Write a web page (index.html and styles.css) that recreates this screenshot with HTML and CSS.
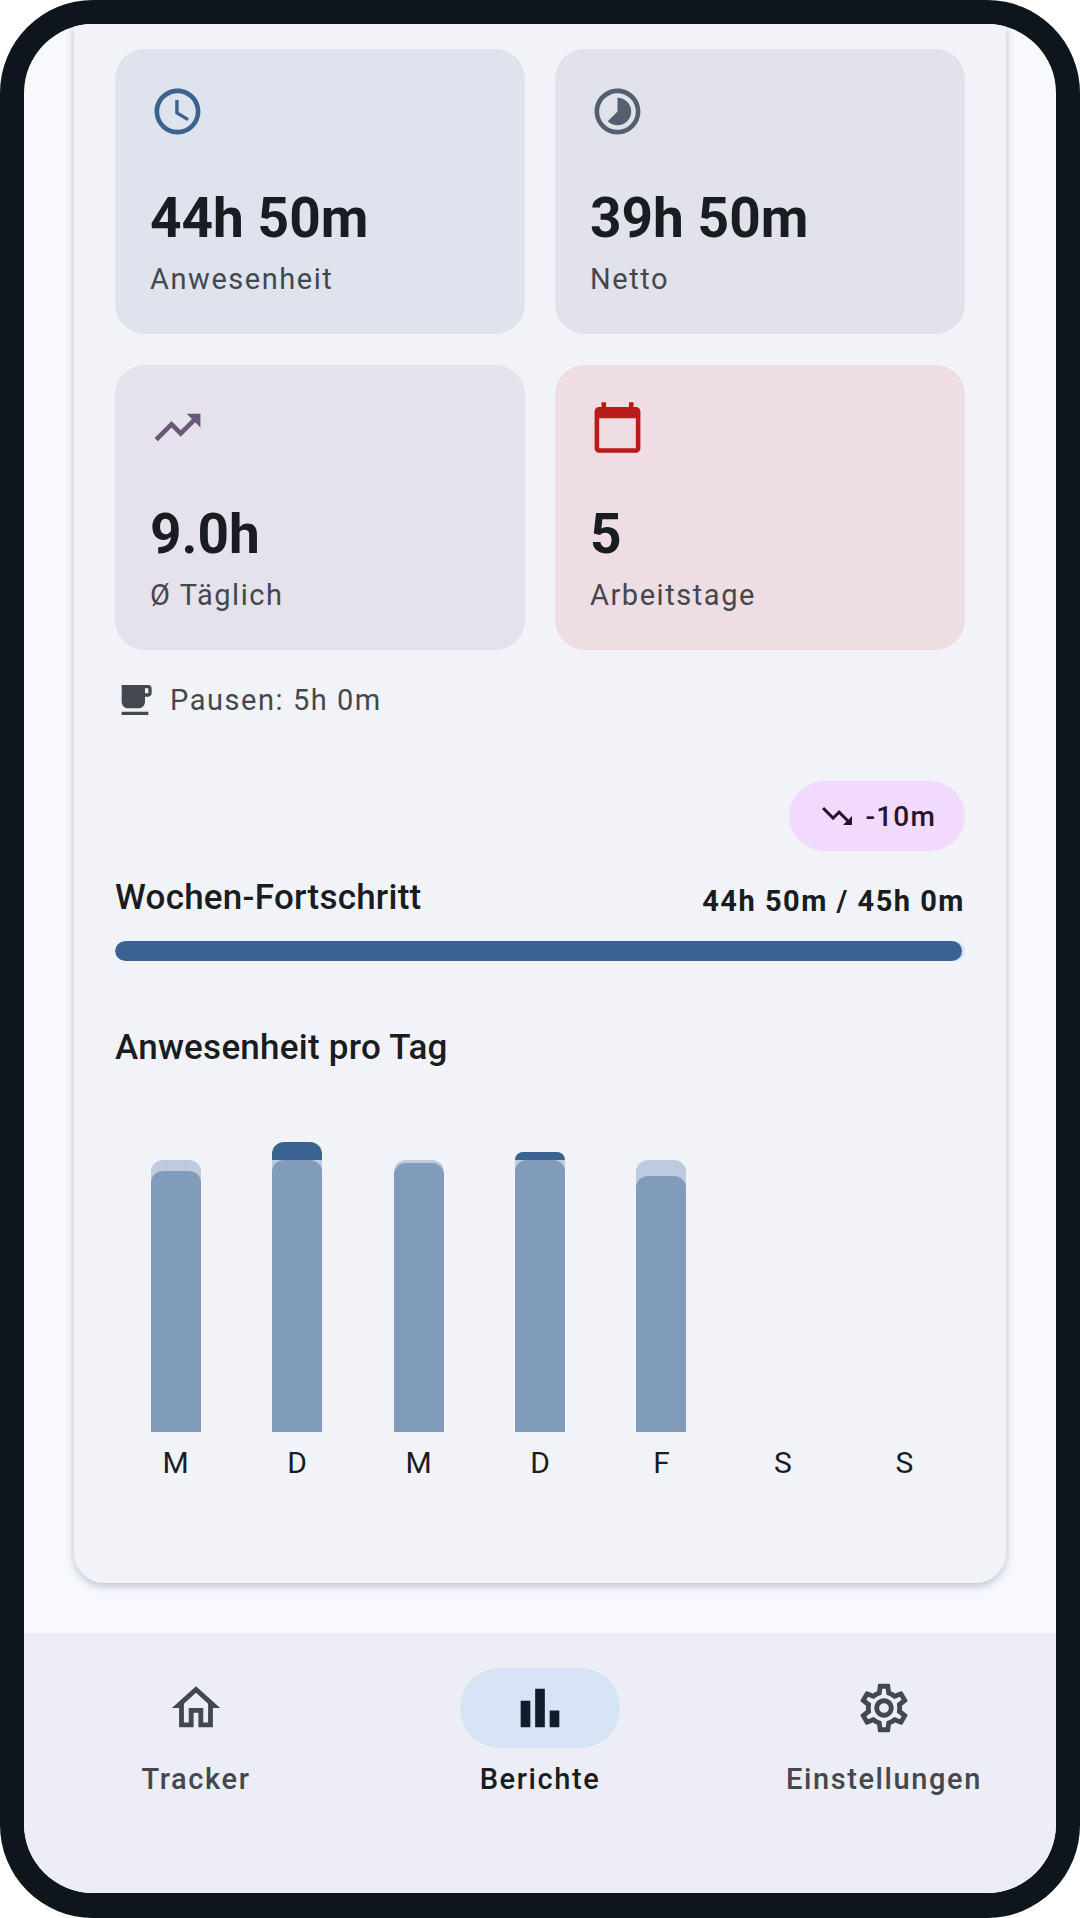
FILE: index.html
```html
<!DOCTYPE html>
<html lang="de">
<head>
<meta charset="utf-8">
<title>Berichte</title>
<link rel="stylesheet" href="styles.css">
</head>
<body>
<div class="phone">
  <div class="screen">
    <main class="scroll">
      <section class="card">
        <div class="tiles">
          <article class="tile tile-blue">
            <svg class="tile-icon icon-blue" viewBox="0 0 24 24"><path d="M11.99 2C6.47 2 2 6.48 2 12s4.47 10 9.99 10C17.52 22 22 17.52 22 12S17.52 2 11.99 2zM12 20c-4.42 0-8-3.58-8-8s3.58-8 8-8 8 3.58 8 8-3.58 8-8 8zm.5-13H11v6l5.25 3.15.75-1.23-4.5-2.67z"/></svg>
            <div class="tile-value">44h 50m</div>
            <div class="tile-label">Anwesenheit</div>
          </article>
          <article class="tile tile-grey">
            <svg class="tile-icon icon-grey" viewBox="0 0 24 24"><path d="M16.24 7.76C15.07 6.59 13.54 6 12 6v6l-4.24 4.24c2.34 2.34 6.14 2.34 8.49 0 2.34-2.34 2.34-6.14-.01-8.48zM12 2C6.48 2 2 6.48 2 12s4.48 10 10 10 10-4.48 10-10S17.52 2 12 2zm0 18c-4.42 0-8-3.58-8-8s3.58-8 8-8 8 3.58 8 8-3.58 8-8 8z"/></svg>
            <div class="tile-value">39h 50m</div>
            <div class="tile-label">Netto</div>
          </article>
          <article class="tile tile-violet">
            <svg class="tile-icon icon-violet" viewBox="0 0 24 24"><path d="M16 6l2.29 2.29-4.88 4.88-4-4L2 16.59 3.41 18l6-6 4 4 6.3-6.29L22 12V6z"/></svg>
            <div class="tile-value">9.0h</div>
            <div class="tile-label">Ø Täglich</div>
          </article>
          <article class="tile tile-red">
            <svg class="tile-icon icon-red" viewBox="0 0 24 24"><path d="M20 3h-1V1h-2v2H7V1H5v2H4c-1.1 0-2 .9-2 2v16c0 1.1.9 2 2 2h16c1.1 0 2-.9 2-2V5c0-1.1-.9-2-2-2zm0 18H4V8h16v13z"/></svg>
            <div class="tile-value">5</div>
            <div class="tile-label">Arbeitstage</div>
          </article>
        </div>

        <div class="breaks">
          <svg class="breaks-icon" viewBox="0 0 24 24"><path d="M20 3H4v10c0 2.21 1.79 4 4 4h6c2.21 0 4-1.79 4-4v-3h2c1.11 0 2-.9 2-2V5c0-1.11-.89-2-2-2zm0 5h-2V5h2v3zM4 19h16v2H4z"/></svg>
          <span>Pausen: 5h 0m</span>
        </div>

        <div class="delta-row">
          <div class="delta">
            <svg class="delta-icon" viewBox="0 0 24 24"><path d="M16 18l2.29-2.29-4.88-4.88-4 4L2 7.41 3.41 6l6 6 4-4 6.3 6.29L22 12v6z"/></svg>
            <span>-10m</span>
          </div>
        </div>

        <div class="progress-head">
          <h2 class="heading">Wochen-Fortschritt</h2>
          <span class="progress-value">44h 50m / 45h 0m</span>
        </div>
        <div class="progress-track"><div class="progress-fill" style="width:99.6%"></div></div>

        <h2 class="heading chart-heading">Anwesenheit pro Tag</h2>
        <div class="chart">
          <div class="day"><div class="track"><div class="bar-target"><span class="bar-fill" style="height:261px"></span></div></div><span class="day-label">M</span></div>
          <div class="day"><div class="track"><span class="bar-excess" style="height:18px"></span><div class="bar-target bar-target-full"><span class="bar-fill" style="height:272px"></span></div></div><span class="day-label">D</span></div>
          <div class="day"><div class="track"><div class="bar-target"><span class="bar-fill" style="height:269px"></span></div></div><span class="day-label">M</span></div>
          <div class="day"><div class="track"><span class="bar-excess" style="height:8px"></span><div class="bar-target bar-target-full"><span class="bar-fill" style="height:272px"></span></div></div><span class="day-label">D</span></div>
          <div class="day"><div class="track"><div class="bar-target"><span class="bar-fill" style="height:256px"></span></div></div><span class="day-label">F</span></div>
          <div class="day"><div class="track"></div><span class="day-label">S</span></div>
          <div class="day"><div class="track"></div><span class="day-label">S</span></div>
        </div>
      </section>
    </main>

    <nav class="nav">
      <div class="nav-item">
        <div class="nav-pill">
          <svg class="nav-icon" viewBox="0 0 24 24"><path d="M12 5.69l5 4.5V18h-2v-6H9v6H7v-7.81l5-4.5M12 3L2 12h3v8h6v-6h2v6h6v-8h3L12 3z"/></svg>
        </div>
        <span class="nav-label">Tracker</span>
      </div>
      <div class="nav-item nav-item-active">
        <div class="nav-pill">
          <svg class="nav-icon" viewBox="0 0 24 24"><path d="M4 9h4v11H4zm12 4h4v7h-4zm-6-9h4v16h-4z"/></svg>
        </div>
        <span class="nav-label">Berichte</span>
      </div>
      <div class="nav-item">
        <div class="nav-pill">
          <svg class="nav-icon" viewBox="0 0 24 24"><path d="M19.43 12.98c.04-.32.07-.64.07-.98 0-.34-.03-.66-.07-.98l2.11-1.65c.19-.15.24-.42.12-.64l-2-3.46c-.09-.16-.26-.25-.44-.25-.06 0-.12.01-.17.03l-2.49 1c-.52-.4-1.08-.73-1.69-.98l-.38-2.65C14.46 2.18 14.25 2 14 2h-4c-.25 0-.46.18-.49.42l-.38 2.65c-.61.25-1.17.59-1.69.98l-2.49-1c-.06-.02-.12-.03-.18-.03-.17 0-.34.09-.43.25l-2 3.46c-.13.22-.07.49.12.64l2.11 1.65c-.04.32-.07.65-.07.98 0 .33.03.66.07.98l-2.11 1.65c-.19.15-.24.42-.12.64l2 3.46c.09.16.26.25.44.25.06 0 .12-.01.17-.03l2.49-1c.52.4 1.08.73 1.69.98l.38 2.65c.03.24.24.42.49.42h4c.25 0 .46-.18.49-.42l.38-2.65c.61-.25 1.17-.59 1.69-.98l2.49 1c.06.02.12.03.18.03.17 0 .34-.09.43-.25l2-3.46c.12-.22.07-.49-.12-.64l-2.11-1.65zm-1.98-1.71c.04.31.05.52.05.73 0 .21-.02.43-.05.73l-.14 1.13.89.7 1.08.84-.7 1.21-1.27-.51-1.04-.42-.9.68c-.43.32-.84.56-1.25.73l-1.06.43-.16 1.13-.2 1.35h-1.4l-.19-1.35-.16-1.13-1.06-.43c-.43-.18-.83-.41-1.23-.71l-.91-.7-1.06.43-1.27.51-.7-1.21 1.08-.84.89-.7-.14-1.13c-.03-.31-.05-.54-.05-.74s.02-.43.05-.73l.14-1.13-.89-.7-1.08-.84.7-1.21 1.27.51 1.04.42.9-.68c.43-.32.84-.56 1.25-.73l1.06-.43.16-1.13.2-1.35h1.39l.19 1.35.16 1.13 1.06.43c.43.18.83.41 1.23.71l.91.7 1.06-.43 1.27-.51.7 1.21-1.07.85-.89.7.14 1.13zM12 8c-2.21 0-4 1.79-4 4s1.79 4 4 4 4-1.79 4-4-1.79-4-4-4zm0 6c-1.1 0-2-.9-2-2s.9-2 2-2 2 .9 2 2-.9 2-2 2z"/></svg>
        </div>
        <span class="nav-label">Einstellungen</span>
      </div>
    </nav>
  </div>
</div>
</body>
</html>
```

FILE: styles.css
```css
* { box-sizing: border-box; }

html, body {
  margin: 0;
  padding: 0;
  background: #ffffff;
}

body {
  font-family: Roboto, "Noto Sans", sans-serif;
  color: #191c20;
}

.phone {
  width: 1080px;
  height: 1918px;
  padding: 24px 24px 25px;
  background: #0f161b;
  border-radius: 93px;
}

.screen {
  display: flex;
  flex-direction: column;
  height: 100%;
  overflow: hidden;
  background: #f8f9ff;
  border-radius: 69px;
}

.scroll {
  height: 1609px;
  padding: 0 50px;
  flex: none;
}

.card {
  height: 1559px;
  padding: 25px 41px 0;
  background: #f1f3f9;
  border-radius: 0 0 30px 30px;
  box-shadow: 0 3px 8px rgba(40, 50, 70, 0.28);
}

.tiles {
  display: grid;
  grid-template-columns: 410px 410px;
  grid-auto-rows: 285px;
  gap: 31px 30px;
}

.tile {
  padding: 35px;
  border-radius: 30px;
}

.tile-blue { background: #dee3ed; }
.tile-grey { background: #e2e2ea; }
.tile-violet { background: #e5e2eb; }
.tile-red { background: #eedde2; }

.tile-icon {
  display: block;
  width: 55px;
  height: 55px;
}

.icon-blue { fill: #3a6391; }
.icon-grey { fill: #535f70; }
.icon-violet { fill: #6b5778; }
.icon-red { fill: #ba1a1a; }

.tile-value {
  margin-top: 47px;
  font-size: 55px;
  line-height: 64px;
  font-weight: 700;
}

.tile-label {
  margin-top: 9px;
  font-size: 29px;
  line-height: 40px;
  letter-spacing: 1.55px;
  color: #44474e;
}

.breaks {
  display: flex;
  align-items: center;
  gap: 15px;
  margin-top: 30px;
  font-size: 29px;
  line-height: 40px;
  letter-spacing: 1.55px;
  color: #44474e;
}

.breaks-icon {
  width: 40px;
  height: 40px;
  fill: #44474e;
}

.delta-row {
  display: flex;
  justify-content: flex-end;
  margin-top: 61px;
}

.delta {
  display: flex;
  align-items: center;
  gap: 10px;
  height: 70px;
  padding: 0 29px 0 30px;
  border-radius: 35px;
  background: #f2daff;
  color: #251431;
  font-size: 28px;
  font-weight: 500;
  letter-spacing: 1.2px;
}

.delta-icon {
  width: 36px;
  height: 36px;
  fill: #251431;
}

.progress-head {
  display: flex;
  justify-content: space-between;
  align-items: center;
  margin-top: 24px;
  height: 44px;
}

.heading {
  margin: 0;
  padding-top: 2px;
  font-size: 35px;
  line-height: 44px;
  font-weight: 500;
  letter-spacing: 0.25px;
}

.progress-value {
  padding-top: 8px;
  font-size: 29px;
  font-weight: 700;
  letter-spacing: 1.5px;
}

.progress-track {
  height: 20px;
  margin-top: 22px;
  overflow: hidden;
  background: #d6e4f5;
  border-radius: 10px;
}

.progress-fill {
  height: 100%;
  background: #3a6391;
  border-radius: 10px;
}

.chart-heading {
  margin-top: 63px;
}

.chart {
  display: grid;
  grid-template-columns: repeat(7, 1fr);
  margin-top: 62px;
}

.day {
  display: flex;
  flex-direction: column;
  align-items: center;
}

.track {
  display: flex;
  flex-direction: column;
  justify-content: flex-end;
  width: 50px;
  height: 300px;
}

.bar-excess {
  display: block;
  background: #3a6391;
  border-radius: 12px 12px 0 0;
}

.bar-target {
  position: relative;
  height: 272px;
  background: #bccbdd;
  border-radius: 12px 12px 0 0;
}

.bar-target-full { border-radius: 0; }

.bar-fill {
  position: absolute;
  left: 0;
  right: 0;
  bottom: 0;
  background: #809cba;
  border-radius: 12px 12px 0 0;
}

.day-label {
  margin-top: 13px;
  font-size: 30px;
  line-height: 36px;
  color: #191c20;
}

.nav {
  flex: 1;
  display: grid;
  grid-template-columns: repeat(3, 1fr);
  background: #ecedf5;
}

.nav-item {
  display: flex;
  flex-direction: column;
  align-items: center;
  padding-top: 35px;
}

.nav-pill {
  display: flex;
  justify-content: center;
  align-items: center;
  width: 160px;
  height: 80px;
  border-radius: 40px;
}

.nav-item-active .nav-pill { background: #d6e4f5; }

.nav-icon {
  width: 58px;
  height: 58px;
  fill: #44474e;
}

.nav-item-active .nav-icon { fill: #0f1c2b; }

.nav-label {
  margin-top: 13px;
  font-size: 29px;
  line-height: 36px;
  font-weight: 500;
  letter-spacing: 1.6px;
  color: #44474e;
}

.nav-item-active .nav-label { color: #191c20; }
```
